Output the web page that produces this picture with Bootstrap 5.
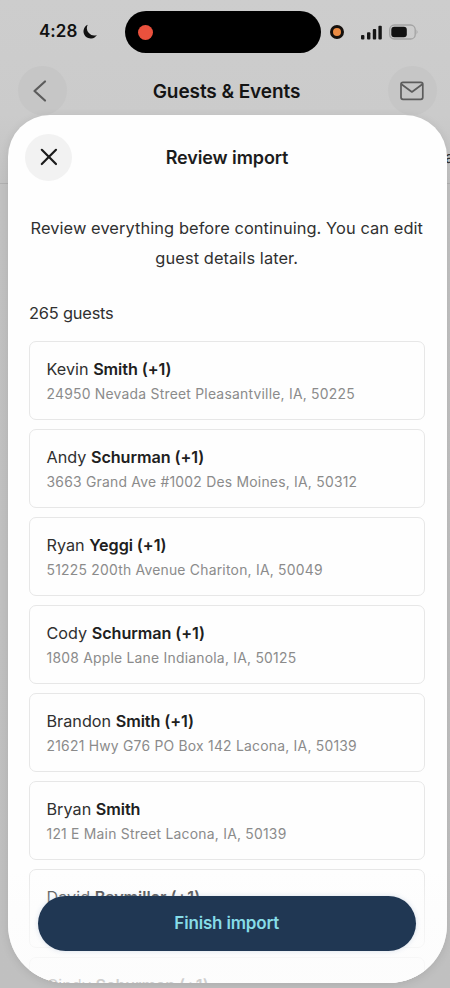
<!DOCTYPE html>
<html lang="en">
<head>
<meta charset="utf-8">
<meta name="viewport" content="width=device-width, initial-scale=1">
<title>Review import</title>
<link href="https://cdn.jsdelivr.net/npm/bootstrap@5.3.0/dist/css/bootstrap.min.css" rel="stylesheet">
<style>
body{background:linear-gradient(#cdcdcd 0,#cbcbcb 115px,#c2c2c2 190px,#c0c0c0 100%);font-family:Inter,"Liberation Sans",sans-serif;color:#303030}
.phone{width:450px;height:988px}
.status{height:66px;padding:11px 32px 0 39px}
.clock{font-size:17px;font-weight:600;color:#111;width:86px;height:42px;letter-spacing:.05px;gap:5px}
.island{width:196px;height:42px;background:#000;padding-left:13px}
.status-side{height:42px}
.rec{width:15px;height:15px;background:#ea513d}
.mic{width:14px;height:14px;background:#eb8b43;border:3px solid #15100d;margin-left:9px}
.signal{margin-left:17px}
.battery{margin-left:6px}
.topnav{height:49px;padding:0 13px 0 18px}
.round-btn{width:49px;height:49px;background:#c6c6c6}
.page-title{font-size:19px;font-weight:600;color:#141414;letter-spacing:-.08px;padding:3px 2px 0 0}
.behind-line{top:183px;left:0;height:1px;background:#b1b1b1}
.behind-tab{top:145px;left:445px;font-size:16px;color:#333}
.sheet{width:439px;height:868px;margin-left:7.5px;background:#fefefe;border-radius:42px 42px 58px 58px;box-shadow:0 2px 10px rgba(0,0,0,.1)}
.sheet-head{height:84px;padding:0 17.5px}
.close-btn{width:47px;height:47px;background:#f2f2f2;border:0}
.sheet-title{font-size:18px;font-weight:600;color:#1c1c1c;letter-spacing:-.1px;padding-top:1px}
.sheet-body{padding:15px 22px 0 21.5px}
.intro{font-size:16.4px;line-height:29.5px;letter-spacing:.08px;white-space:nowrap}
.count{font-size:16.4px;line-height:24px;margin:28px 0 16px;letter-spacing:-.2px}
.guests{gap:9px}
.guest{height:79px;flex:none;border:1.5px solid #e7e7e7;border-radius:7px;background:#fefefe;padding:15px 16.5px 0}
.guest-name{font-size:16.2px;line-height:24px;letter-spacing:.02px}
.guest-name b{font-weight:600;color:#202020;letter-spacing:-.08px}
.guest-addr{font-size:13.9px;line-height:24px;padding-top:1px;color:#8b8b8b;letter-spacing:.23px;white-space:nowrap}
.footer-fade{height:112px;padding:25px 31px 32px 30.5px;background:linear-gradient(rgba(253,253,253,0),rgba(252,252,252,.45) 30%,rgba(252,252,252,.75) 70%,rgba(252,252,252,.8))}
.finish{background:#203753;color:#86dce8;font-size:17px;font-weight:600;border:0;box-shadow:0 0 5px rgba(80,120,170,.22);letter-spacing:-.18px}
</style>
<script src="https://cdn.jsdelivr.net/npm/bootstrap@5.3.0/dist/js/bootstrap.bundle.min.js"></script>
</head>
<body>
<div class="phone position-relative overflow-hidden">
  <div class="behind-line position-absolute w-100"></div>
  <div class="behind-tab position-absolute">a</div>

  <div class="status d-flex align-items-start">
    <div class="clock d-flex align-items-center flex-shrink-0">4:28
      <svg width="16" height="16" viewBox="0 0 15 16"><path d="M5.2 .8A7.2 7.2 0 1 0 14.4 11 7.4 7.4 0 0 1 5.2 .8Z" fill="#111"/></svg>
    </div>
    <div class="island rounded-pill d-flex align-items-center flex-shrink-0"><span class="rec rounded-circle"></span></div>
    <div class="status-side d-flex align-items-center">
      <span class="mic rounded-circle"></span>
      <svg class="signal" width="22" height="15" viewBox="0 0 22 15" fill="#171717"><rect x="0" y="10" width="3.4" height="4.5" rx="1"/><rect x="6" y="7.3" width="3.4" height="7.2" rx="1"/><rect x="11.8" y="4" width="3.4" height="10.5" rx="1"/><rect x="17.4" y=".8" width="3.4" height="13.7" rx="1"/></svg>
      <svg class="battery" width="30" height="16" viewBox="0 0 30 16"><rect x=".7" y="1" width="25.5" height="14" rx="4.6" fill="none" stroke="#a3a3a3" stroke-width="1.3"/><rect x="2.3" y="2.8" width="15.5" height="10.4" rx="3" fill="#111"/><path d="M27.6 5.6q1.8 2.4 0 4.8Z" fill="#9c9c9c"/></svg>
    </div>
  </div>

  <nav class="topnav d-flex align-items-center justify-content-between">
    <div class="round-btn rounded-circle d-flex align-items-center justify-content-center">
      <svg width="28" height="26" viewBox="0 0 28 26"><path d="M16 3.5 5.5 13 16 22.5" fill="none" stroke="#5c5c5c" stroke-width="2.2" stroke-linecap="round" stroke-linejoin="round"/></svg>
    </div>
    <div class="page-title">Guests &amp; Events</div>
    <div class="round-btn rounded-circle d-flex align-items-center justify-content-center">
      <svg width="24" height="20" viewBox="0 0 24 20" fill="none" stroke="#5c5c5c" stroke-width="1.7" stroke-linejoin="round"><rect x="1" y="1.3" width="21.8" height="17" rx="2"/><path d="m1.5 3.2 10.4 7.8 10.4-7.8"/></svg>
    </div>
  </nav>

  <main class="sheet overflow-hidden position-relative">
    <header class="sheet-head d-flex align-items-center justify-content-between">
      <button class="close-btn rounded-circle d-flex align-items-center justify-content-center p-0" aria-label="Close">
        <svg width="18" height="18" viewBox="0 0 18 18"><path d="M1.8 1.8 16 16M16 1.8 1.8 16" stroke="#1c1c1c" stroke-width="2.2" stroke-linecap="round"/></svg>
      </button>
      <div class="sheet-title">Review import</div>
      <span class="close-btn invisible"></span>
    </header>
    <div class="sheet-body">
      <p class="intro text-center mb-0">Review everything before continuing. You can edit<br>guest details later.</p>
      <div class="count">265 guests</div>
      <div class="guests d-flex flex-column">
        <div class="guest"><div class="guest-name">Kevin <b>Smith (+1)</b></div><div class="guest-addr">24950 Nevada Street Pleasantville, IA, 50225</div></div>
        <div class="guest"><div class="guest-name">Andy <b>Schurman (+1)</b></div><div class="guest-addr">3663 Grand Ave #1002 Des Moines, IA, 50312</div></div>
        <div class="guest"><div class="guest-name">Ryan <b>Yeggi (+1)</b></div><div class="guest-addr">51225 200th Avenue Chariton, IA, 50049</div></div>
        <div class="guest"><div class="guest-name">Cody <b>Schurman (+1)</b></div><div class="guest-addr">1808 Apple Lane Indianola, IA, 50125</div></div>
        <div class="guest"><div class="guest-name">Brandon <b>Smith (+1)</b></div><div class="guest-addr">21621 Hwy G76 PO Box 142 Lacona, IA, 50139</div></div>
        <div class="guest"><div class="guest-name">Bryan <b>Smith</b></div><div class="guest-addr">121 E Main Street Lacona, IA, 50139</div></div>
        <div class="guest"><div class="guest-name">David <b>Baymiller (+1)</b></div></div>
        <div class="guest"><div class="guest-name">Cindy <b>Schurman (+1)</b></div></div>
      </div>
    </div>
    <div class="footer-fade position-absolute bottom-0 start-0 w-100">
      <button class="finish btn rounded-pill w-100 h-100 p-0">Finish import</button>
    </div>
  </main>
</div>
</body>
</html>
